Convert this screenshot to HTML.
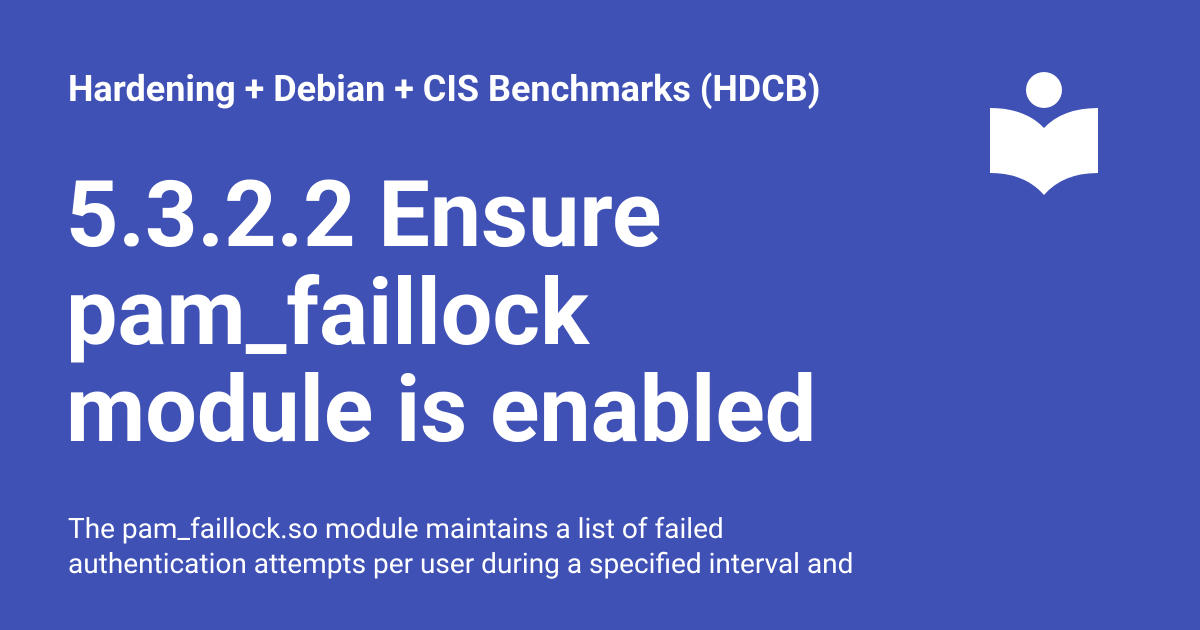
<!DOCTYPE html>
<html><head><meta charset="utf-8"><style>
html,body{margin:0;padding:0}
body{width:1200px;height:630px;background:#4051b5;position:relative;overflow:hidden;font-family:"Roboto","Liberation Sans",sans-serif;color:#fff}
.site{position:absolute;left:68px;top:68px;font-size:36px;font-weight:bold;white-space:nowrap}
.title{position:absolute;left:66px;top:167px;font-size:91.5px;font-weight:bold;line-height:97.5px;white-space:nowrap}
.desc{position:absolute;left:68px;top:511px;font-size:28px;line-height:35px;white-space:nowrap}
svg{position:absolute;left:0;top:0}
</style></head><body>
<div class="site">Hardening + Debian + CIS Benchmarks (HDCB)</div>
<div class="title">5.3.2.2 Ensure<br>pam_faillock<br>module is enabled</div>
<div class="desc">The pam_faillock.so module maintains a list of failed<br>authentication attempts per user during a specified interval and</div>
<svg width="1200" height="630"><circle cx="1044" cy="90" r="18" fill="#fff"/>
<path d="M990 108 Q1025 108 1044 128 Q1063 108 1098 108 L1098 173 Q1063 173 1044 195 Q1025 173 990 173 Z" fill="#fff"/></svg>
</body></html>
